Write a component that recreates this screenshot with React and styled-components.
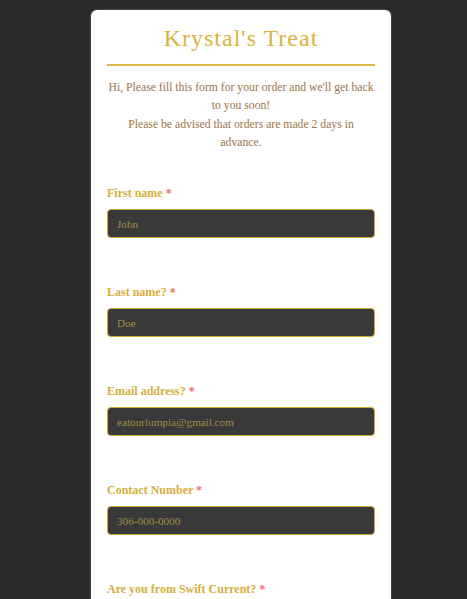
import React from 'react';
import styled, { createGlobalStyle } from 'styled-components';

const GlobalStyle = createGlobalStyle`
  html, body {
    margin: 0;
    padding: 0;
    background: #2b2b2b;
  }
  body {
    font-family: "Liberation Serif", Georgia, serif;
  }
`;

const Page = styled.div`
  box-sizing: border-box;
  min-height: 100vh;
  display: flex;
  justify-content: center;
  padding: 10px 0 0 15px;
  background-color: #2b2b2b;
`;

const Card = styled.div`
  box-sizing: border-box;
  width: 300px;
  background: #fff;
  border-radius: 6px;
  padding: 13px 16px 20px;
  box-shadow: 0 0 2px rgba(200, 200, 200, 0.5);
`;

const Title = styled.h1`
  margin: 0;
  padding-bottom: 11px;
  text-align: center;
  font-family: "Liberation Serif", serif;
  font-weight: normal;
  font-size: 24px;
  line-height: 30px;
  letter-spacing: 1px;
  color: #dab33f;
  border-bottom: 2px solid #e2b646;
`;

const Intro = styled.p`
  margin: 13px 0 0;
  text-align: center;
  font-size: 11.7px;
  line-height: 18.3px;
  color: #9d7448;
`;

const Field = styled.div`
  display: flex;
  flex-direction: column;
  margin-top: ${p => p.first ? '34px' : '47px'};
`;

const Label = styled.label`
  font-family: "Liberation Serif", serif;
  font-weight: bold;
  font-size: 12px;
  line-height: 14px;
  color: #d6ae3c;
  margin-bottom: 9px;
`;

const Req = styled.span`
  color: #f06a6a;
`;

const Input = styled.input`
  box-sizing: border-box;
  width: 100%;
  height: 29px;
  padding: 0 9px;
  border: 1px solid #cfa834;
  border-radius: 4px;
  background: #393939;
  font-family: "Liberation Serif", serif;
  font-size: 11.2px;
  color: #c9a545;
  outline: none;
  &::placeholder {
    color: #a08a45;
  }
`;

const fields = [
  { label: 'First name', ph: 'John' },
  { label: 'Last name?', ph: 'Doe' },
  { label: 'Email address?', ph: 'eatourlumpia@gmail.com' },
  { label: 'Contact Number', ph: '306-000-0000' },
  { label: 'Are you from Swift Current?', ph: '' },
];

const App = () => {
  return (
    <Page>
      <GlobalStyle />
      <Card>
        <Title>Krystal's Treat</Title>
        <Intro>
          Hi, Please fill this form for your order and we'll get back to you soon!
          <br />
          Please be advised that orders are made 2 days in advance.
        </Intro>
        {fields.map((f, i) => (
          <Field key={f.label} first={i === 0}>
            <Label>{f.label} <Req>*</Req></Label>
            <Input placeholder={f.ph} />
          </Field>
        ))}
      </Card>
    </Page>
  );
};

export default App;
